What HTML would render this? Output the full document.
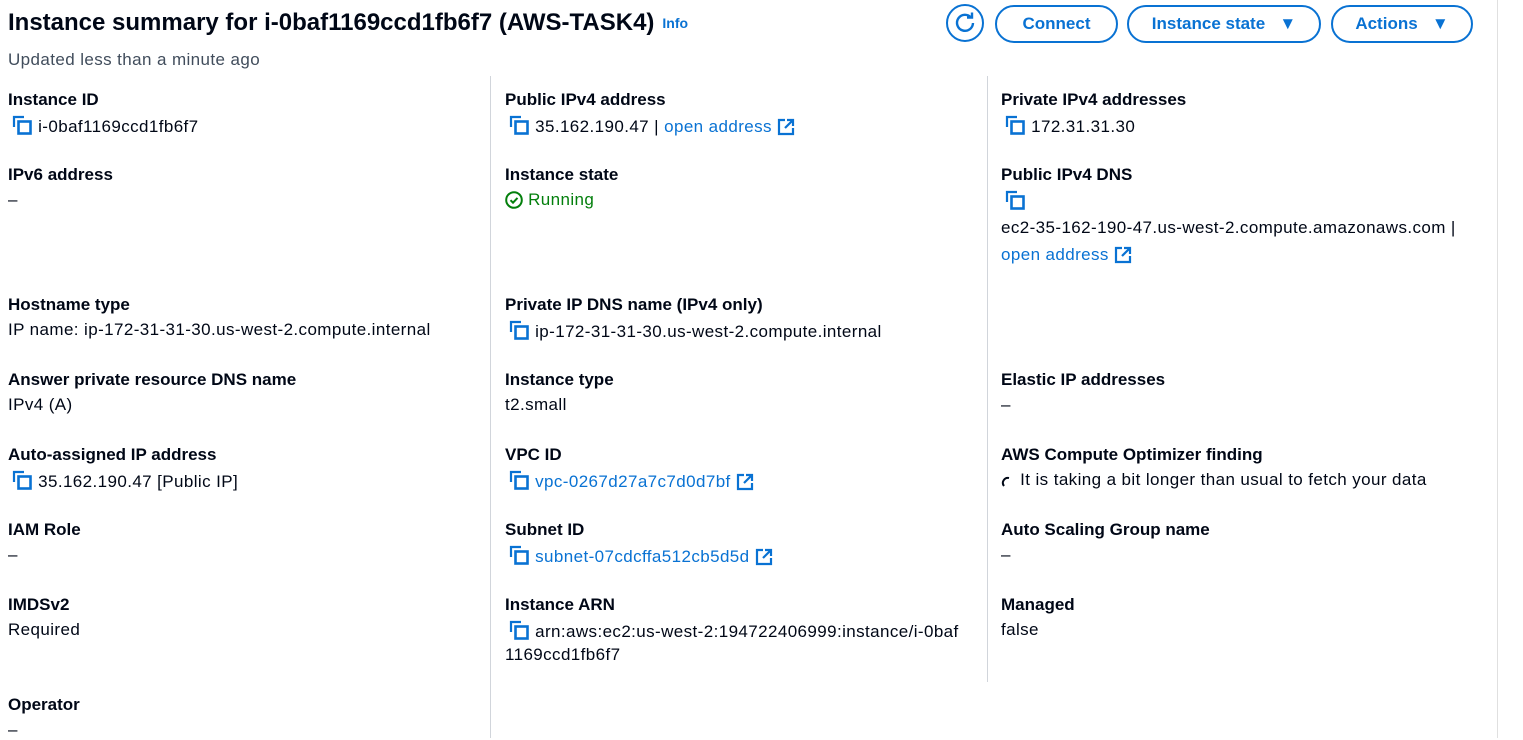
<!DOCTYPE html>
<html><head><meta charset="utf-8"><style>
body{margin:0;width:1523px;height:738px;background:#fff;font-family:"Liberation Sans",sans-serif;color:#000716;position:relative;overflow:hidden}
.a{position:absolute;white-space:nowrap;font-size:17px;line-height:20px;letter-spacing:0.4px;margin-top:0px}
.l{font-weight:bold;letter-spacing:0}
.k{color:#0972d3}
h1{position:absolute;left:8px;top:8px;margin:0;font-size:24px;line-height:30px;font-weight:bold;letter-spacing:0;white-space:nowrap}
h1 span{font-size:14px;color:#0972d3;letter-spacing:0;margin-left:8px;vertical-align:2px}
.btn{position:absolute;top:5px;height:34px;border:2px solid #0972d3;border-radius:20px;color:#0972d3;font-weight:bold;font-size:17px;line-height:34px;text-align:center;box-sizing:content-box}
.vl{position:absolute;width:1px;background:#d1d5db}
svg{vertical-align:-4px}
</style></head><body>
<h1>Instance summary for i-0baf1169ccd1fb6f7 (AWS-TASK4)<span>Info</span></h1>
<div class="a" style="left:8px;top:50px;color:#414d5c">Updated less than a minute ago</div>
<div class="btn" style="left:946px;width:34px;border-radius:50%;top:4px;height:34px"><svg width="22" height="22" viewBox="0 0 22 22" style="margin-top:6px;vertical-align:top"><path d="M17 5.5A8 8 0 1 0 19 11" fill="none" stroke="#0972d3" stroke-width="2.4"/><path d="M13 5.5h5v-5" fill="none" stroke="#0972d3" stroke-width="2.4"/></svg></div>
<div class="btn" style="left:995px;width:119px">Connect</div>
<div class="btn" style="left:1127px;width:190px">Instance state&nbsp;&nbsp; ▼</div>
<div class="btn" style="left:1331px;width:138px">Actions&nbsp;&nbsp; ▼</div>
<div class="vl" style="left:490px;top:76px;height:662px"></div>
<div class="vl" style="left:987px;top:76px;height:606px"></div>
<div class="vl" style="left:1497px;top:0;height:738px;background:#e0e0e0"></div>
<svg width="0" height="0" style="position:absolute"><defs>
<g id="cp"><path d="M2 12V2h10" fill="none" stroke="#0972d3" stroke-width="2.2"/><rect x="6.5" y="6.5" width="12" height="12" fill="none" stroke="#0972d3" stroke-width="2.6"/></g>
<g id="ex"><path d="M8 2H2v14h14v-6" fill="none" stroke="#0972d3" stroke-width="2.2"/><path d="M10 2h6v6M16 2L8 10" fill="none" stroke="#0972d3" stroke-width="2.2"/></g>
</defs></svg>
<!-- col1 -->
<div class="a l" style="left:8px;top:90px">Instance ID</div>
<div class="a" style="left:12px;top:115px"><svg width="21" height="21"><use href="#cp"/></svg> i-0baf1169ccd1fb6f7</div>
<div class="a l" style="left:8px;top:165px">IPv6 address</div>
<div class="a" style="left:8px;top:190px">–</div>
<div class="a l" style="left:8px;top:295px">Hostname type</div>
<div class="a" style="left:8px;top:320px">IP name: ip-172-31-31-30.us-west-2.compute.internal</div>
<div class="a l" style="left:8px;top:370px">Answer private resource DNS name</div>
<div class="a" style="left:8px;top:395px">IPv4 (A)</div>
<div class="a l" style="left:8px;top:445px">Auto-assigned IP address</div>
<div class="a" style="left:12px;top:470px"><svg width="21" height="21"><use href="#cp"/></svg> 35.162.190.47 [Public IP]</div>
<div class="a l" style="left:8px;top:520px">IAM Role</div>
<div class="a" style="left:8px;top:545px">–</div>
<div class="a l" style="left:8px;top:595px">IMDSv2</div>
<div class="a" style="left:8px;top:620px">Required</div>
<div class="a l" style="left:8px;top:695px">Operator</div>
<div class="a" style="left:8px;top:720px">–</div>
<!-- col2 -->
<div class="a l" style="left:505px;top:90px">Public IPv4 address</div>
<div class="a" style="left:509px;top:115px"><svg width="21" height="21"><use href="#cp"/></svg> 35.162.190.47 | <span class="k">open address <svg width="18" height="18"><use href="#ex"/></svg></span></div>
<div class="a l" style="left:505px;top:165px">Instance state</div>
<div class="a" style="left:505px;top:190px;color:#037f0c"><svg width="18" height="18" viewBox="0 0 18 18"><circle cx="9" cy="9" r="7.8" fill="none" stroke="#037f0c" stroke-width="2"/><path d="M5.5 9.2l2.5 2.5 4.5-4.8" fill="none" stroke="#037f0c" stroke-width="2"/></svg> Running</div>
<div class="a l" style="left:505px;top:295px">Private IP DNS name (IPv4 only)</div>
<div class="a" style="left:509px;top:320px"><svg width="21" height="21"><use href="#cp"/></svg> ip-172-31-31-30.us-west-2.compute.internal</div>
<div class="a l" style="left:505px;top:370px">Instance type</div>
<div class="a" style="left:505px;top:395px">t2.small</div>
<div class="a l" style="left:505px;top:445px">VPC ID</div>
<div class="a k" style="left:509px;top:470px"><svg width="21" height="21"><use href="#cp"/></svg> vpc-0267d27a7c7d0d7bf <svg width="18" height="18"><use href="#ex"/></svg></div>
<div class="a l" style="left:505px;top:520px">Subnet ID</div>
<div class="a k" style="left:509px;top:545px"><svg width="21" height="21"><use href="#cp"/></svg> subnet-07cdcffa512cb5d5d <svg width="18" height="18"><use href="#ex"/></svg></div>
<div class="a l" style="left:505px;top:595px">Instance ARN</div>
<div class="a" style="left:509px;top:620px"><svg width="21" height="21"><use href="#cp"/></svg> arn:aws:ec2:us-west-2:194722406999:instance/i-0baf</div>
<div class="a" style="left:505px;top:645px">1169ccd1fb6f7</div>
<!-- col3 -->
<div class="a l" style="left:1001px;top:90px">Private IPv4 addresses</div>
<div class="a" style="left:1005px;top:115px"><svg width="21" height="21"><use href="#cp"/></svg> 172.31.31.30</div>
<div class="a l" style="left:1001px;top:165px">Public IPv4 DNS</div>
<div class="a" style="left:1005px;top:190px"><svg width="21" height="21"><use href="#cp"/></svg></div>
<div class="a" style="left:1001px;top:218px">ec2-35-162-190-47.us-west-2.compute.amazonaws.com |</div>
<div class="a k" style="left:1001px;top:245px">open address <svg width="18" height="18"><use href="#ex"/></svg></div>
<div class="a l" style="left:1001px;top:370px">Elastic IP addresses</div>
<div class="a" style="left:1001px;top:395px">–</div>
<div class="a l" style="left:1001px;top:445px">AWS Compute Optimizer finding</div>
<div class="a" style="left:1001px;top:470px"><svg width="14" height="14" viewBox="0 0 14 14"><path d="M3 11A5 5 0 0 1 8 3" fill="none" stroke="#000716" stroke-width="2"/></svg> It is taking a bit longer than usual to fetch your data</div>
<div class="a l" style="left:1001px;top:520px">Auto Scaling Group name</div>
<div class="a" style="left:1001px;top:545px">–</div>
<div class="a l" style="left:1001px;top:595px">Managed</div>
<div class="a" style="left:1001px;top:620px">false</div>
</body></html>
